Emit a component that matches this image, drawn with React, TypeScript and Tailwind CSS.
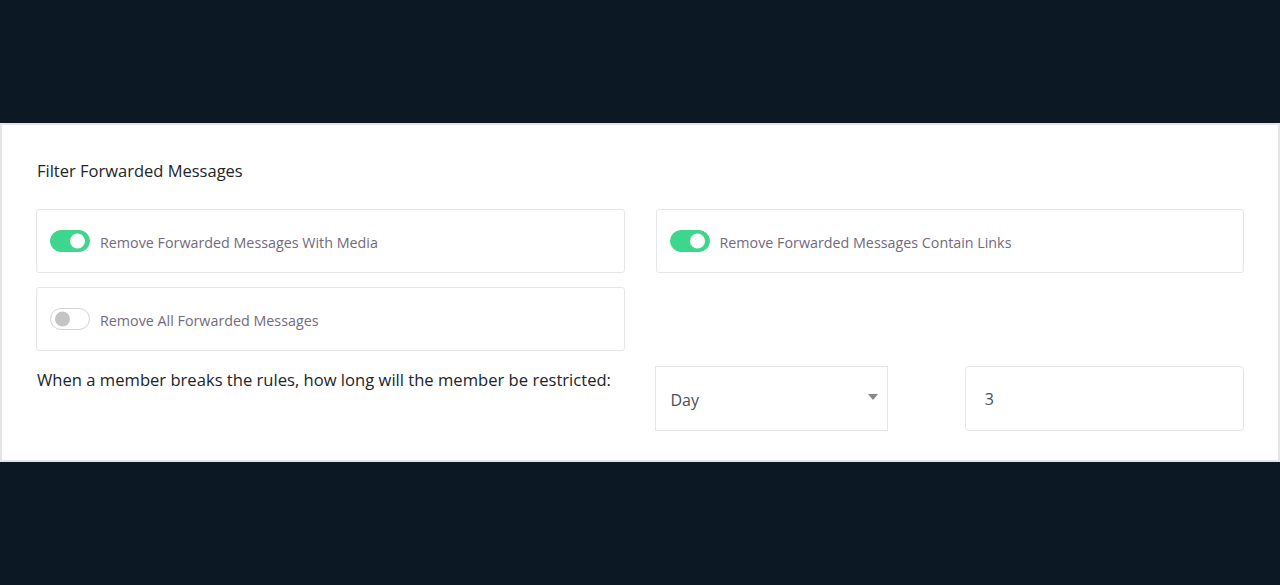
import React, { useState } from 'react';

const Toggle = ({ on, onClick }: { on: boolean; onClick: () => void }) => (
  <button
    onClick={onClick}
    className={`relative h-[22px] w-[40px] shrink-0 rounded-full border ${
      on ? 'bg-[#3dd68c] border-[#3dd68c]' : 'bg-white border-[#d4d4d8]'
    }`}
  >
    <span
      className={`absolute top-1/2 h-[15px] w-[15px] -translate-y-1/2 rounded-full ${
        on ? 'right-[4px] bg-white' : 'left-[4px] bg-[#c4c4c4]'
      }`}
    />
  </button>
);

const OptionCard = ({ label, on, onClick }: { label: string; on: boolean; onClick: () => void }) => (
  <div className="flex h-[64px] items-center gap-[10px] rounded-[3px] border border-[#e4e6ea] px-[13px]">
    <Toggle on={on} onClick={onClick} />
    <span className="pt-[3px] text-[14.3px] text-[#726a7e]">{label}</span>
  </div>
);

export default function App() {
  const [media, setMedia] = useState(true);
  const [links, setLinks] = useState(true);
  const [all, setAll] = useState(false);

  return (
    <div
      className="flex min-h-[585px] flex-col bg-[#0c1925]"
      style={{ fontFamily: '"Open Sans", "Noto Sans", sans-serif' }}
    >
      <div className="h-[123px]" />
      <div className="border-2 border-[#e3e5e8] bg-white px-[34px] pb-[29px] pt-[34px]">
        <h3 className="pl-[1px] text-[16.5px] leading-[24px] text-[#212529]">Filter Forwarded Messages</h3>

        <div className="mt-[26px] grid grid-cols-2 gap-x-[31px] gap-y-[14px]">
          <OptionCard label="Remove Forwarded Messages With Media" on={media} onClick={() => setMedia(!media)} />
          <OptionCard label="Remove Forwarded Messages Contain Links" on={links} onClick={() => setLinks(!links)} />
          <OptionCard label="Remove All Forwarded Messages" on={all} onClick={() => setAll(!all)} />
          <div />
        </div>

        <div className="mt-[15px] grid grid-cols-2 gap-x-[31px]">
          <p className="pl-[1px] pt-[2px] text-[16.6px] leading-[24px] text-[#212529]">
            When a member breaks the rules, how long will the member be restricted:
          </p>
          <div className="-ml-[1px] flex items-start gap-[77px]">
            <div className="relative h-[65px] w-[234px] border border-[#e4e6ea]">
              <select className="h-full w-full appearance-none bg-transparent px-[15px] pt-[2px] text-[16px] text-[#495057] outline-none">
                <option>Day</option>
                <option>Hour</option>
                <option>Week</option>
              </select>
              <span className="pointer-events-none absolute right-[9px] top-[27px] h-0 w-0 border-x-[5px] border-t-[6px] border-x-transparent border-t-[#888]" />
            </div>
            <input
              defaultValue="3"
              className="h-[65px] w-[280px] rounded-[4px] border border-[#e4e6ea] px-[19px] text-[16px] text-[#495057] outline-none"
            />
          </div>
        </div>
      </div>
      <div className="flex-1" />
    </div>
  );
}
